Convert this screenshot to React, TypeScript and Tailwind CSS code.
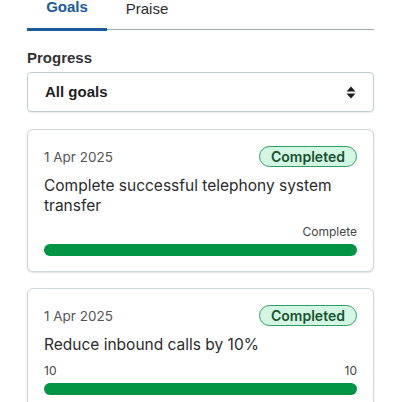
import React from 'react';

interface Goal {
  date: string;
  title: string;
  left: string;
  right: string;
  percent: number;
}

const GOALS: Goal[] = [
  { date: '1 Apr 2025', title: 'Complete successful telephony system transfer', left: '', right: 'Complete', percent: 100 },
  { date: '1 Apr 2025', title: 'Reduce inbound calls by 10%', left: '10', right: '10', percent: 100 },
];

function SortArrows() {
  return (
    <svg width="10" height="13" viewBox="0 0 10 13" className="text-[#1f1f1f]">
      <path d="M5 0.5 L9.5 5.5 H0.5 Z" fill="currentColor" strokeLinejoin="round" />
      <path d="M5 12.5 L9.5 7.5 H0.5 Z" fill="currentColor" strokeLinejoin="round" />
    </svg>
  );
}

function GoalCard({ goal }: { goal: Goal }) {
  return (
    <div className="rounded-md border border-[#cdd4da] bg-white px-4 pt-4 pb-[15px] shadow-[0_1px_2px_rgba(0,0,0,0.12)]">
      {/* date + status */}
      <div className="flex items-center justify-between">
        <span className="text-[13.5px] leading-5 text-[#555]">{goal.date}</span>
        <span className="flex h-[21px] w-[98px] items-center justify-center rounded-full border border-[#2e9e63] bg-[#d3f6e3] text-[14px] font-semibold text-[#17532f]">
          Completed
        </span>
      </div>

      <p className="mt-[9px] text-[15.5px] leading-5 text-[#2b2b2b]">{goal.title}</p>

      <div className="mt-2 flex justify-between text-[12px] leading-4 text-[#444]">
        <span>{goal.left}</span>
        <span>{goal.right}</span>
      </div>

      {/* progress bar */}
      <div className="mt-1 h-3 w-full rounded-full bg-[#e5e7eb]">
        <div className="h-3 rounded-full bg-[#009444]" style={{ width: `${goal.percent}%` }} />
      </div>
    </div>
  );
}

export default function App() {
  return (
    <div className="h-[402px] w-[402px] overflow-hidden bg-white px-[27px] pr-[28px]">
      {/* Tabs */}
      <div className="flex h-[30px] border-b border-[#9ea8b3] font-['Liberation_Sans',Arial,sans-serif] text-[15px]">
        <div className="-mb-px h-[31px] w-20 border-b-[3px] border-[#1c5a9e] text-center font-bold text-[#1c5a9e]">
          <span className="-mt-[3px] block leading-5">Goals</span>
        </div>
        <div className="h-[30px] w-20 text-center text-[#2b2b2b]">
          <span className="-mt-px block leading-5">Praise</span>
        </div>
      </div>

      {/* Progress filter */}
      <div className="mt-[18px] font-['Liberation_Sans',Arial,sans-serif]">
        <label className="block text-[15px] font-bold leading-5 text-[#333]">Progress</label>
        <div className="mt-1 flex h-10 items-center justify-between rounded border border-[#c3cad2] pl-[17px] pr-[17px] shadow-[0_1px_1px_rgba(0,0,0,0.08)]">
          <span className="text-[15px] font-bold text-[#1f1f1f]">All goals</span>
          <SortArrows />
        </div>
      </div>

      {/* Goal cards */}
      <div className="mt-[17px] flex flex-col gap-4 font-['Inter',sans-serif]">
        {GOALS.map((g, i) => (
          <GoalCard key={i} goal={g} />
        ))}
      </div>
    </div>
  );
}
